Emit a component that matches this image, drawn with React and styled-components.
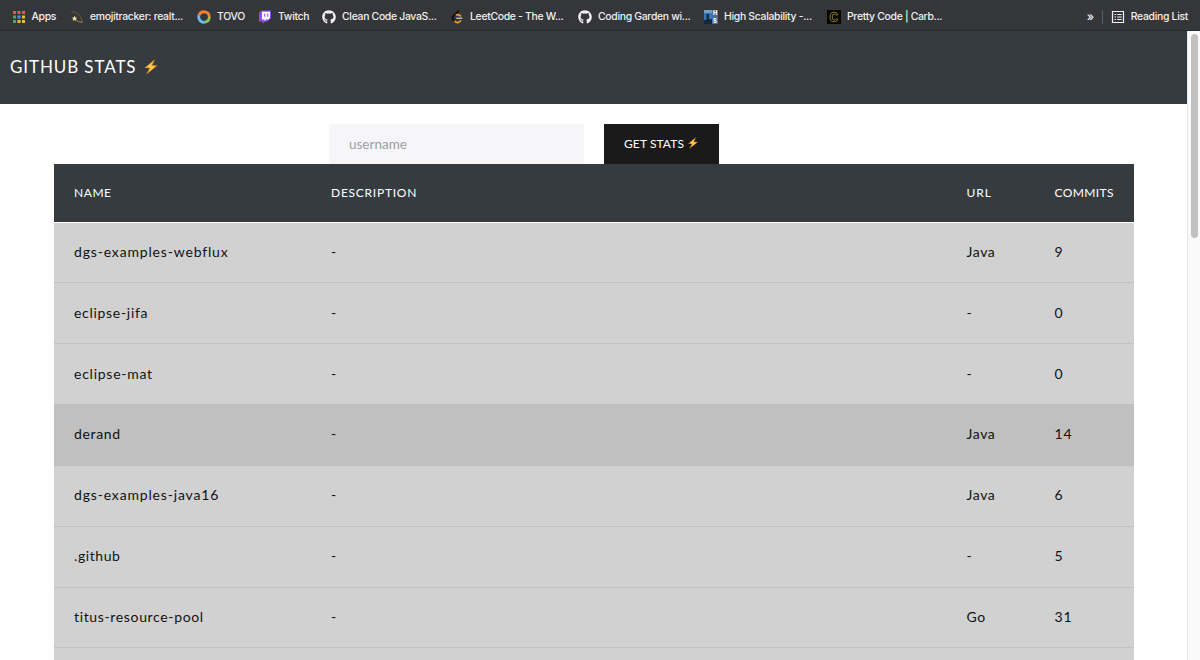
import React, { useState } from "react";
import { FaGithub } from "react-icons/fa";
import styled, { createGlobalStyle } from "styled-components";

const repos = [
  { name: "dgs-examples-webflux", language: "Java", commits: 9, spacing: 0.83 },
  { name: "eclipse-jifa", language: "-", commits: 0, spacing: 0.7 },
  { name: "eclipse-mat", language: "-", commits: 0, spacing: 0.75 },
  { name: "derand", language: "Java", commits: 14, active: true, spacing: 0.65 },
  { name: "dgs-examples-java16", language: "Java", commits: 6, spacing: 0.83 },
  { name: ".github", language: "-", commits: 5, spacing: 0.58 },
  { name: "titus-resource-pool", language: "Go", commits: 31, spacing: 0.65 },
];

const AppsIcon = () => (
  <svg viewBox="0 0 14 14">
    <path fill="#e8564a" d="M1 1h3v3H1zM5.5 1h3v3h-3zM10 1h3v3h-3z" />
    <path fill="#4fa565" d="M1 5.5h3v3H1zM1 10h3v3H1z" />
    <path fill="#4d8ef0" d="M5.5 5.5h3v3h-3z" />
    <path fill="#f3b83f" d="M10 5.5h3v3h-3zM5.5 10h3v3h-3zM10 10h3v3h-3z" />
  </svg>
);

const OrbitIcon = () => (
  <svg viewBox="0 0 14 14" fill="none" strokeLinecap="round">
    <path d="M1.8 1.8C7 1.800 11.800 6 12.200 12" stroke="#75683f" strokeWidth=".8" />
    <path d="M5.500 9.500C7.500 11.700 10 12.600 12.200 12" stroke="#a8924b" strokeWidth=".9" />
    <path
      d="M4.600 5.800l.8 1.700 1.900.3-1.400 1.300.3 1.900-1.600-.9-1.700.9.3-1.900-1.400-1.300 1.900-.3z"
      fill="#f5dd90"
    />
  </svg>
);

const TovoIcon = () => (
  <svg viewBox="0 0 14 14" fill="none" strokeWidth="2.800">
    <path d="M2 5.300A5.300 5.300 0 0 1 12.300 7" stroke="#f08236" />
    <path d="M2 5.300A5.300 5.300 0 0 0 8 12.200" stroke="#66bdf2" />
    <path d="M8 12.200A5.300 5.300 0 0 0 12.300 7" stroke="#8cc45c" />
  </svg>
);

const TwitchIcon = () => (
  <svg viewBox="0 0 14 14">
    <path fill="#8c4bf6" d="M3.300.6H13v7.600l-3.600 3.400H7l-2.400 2.100v-2.100H1V3z" />
    <path fill="#fff" d="M4 1.700h8v6L10.200 9.500H8.200L6.500 11V9.500H4z" />
    <path fill="#8c4bf6" d="M6.200 3.600h1.100v3.200H6.200zM9.200 3.600h1.100v3.200H9.200z" />
  </svg>
);

const LeetIcon = () => (
  <svg viewBox="0 0 14 14" fill="none" strokeWidth="1.700" strokeLinecap="round">
    <path d="M8.300 1L3 6.500Q1.900 7.800 3 9.200L5 11.400" stroke="#090909" />
    <path d="M6.300 4.900Q8.300 3.800 10.500 5.900M5 11.400Q7.500 14 10.500 11" stroke="#f5a02c" />
    <path d="M6.800 8.300h5" stroke="#b3b3b3" strokeWidth="1.400" />
  </svg>
);

const ScalabilityIcon = () => (
  <svg viewBox="0 0 14 14">
    <path fill="#3c74ad" d="M0 0h14v14H0z" />
    <path fill="#6f9fc8" d="M0 0h8v3H0z" />
    <path fill="#14283d" d="M0 10l8-1V14H0zM2.5 4h2.500v6H2.500z" />
    <text x="9" y="5.400" fill="#fff" fontSize="5.600" fontWeight="800">H</text>
    <text x="9" y="12.900" fill="#fff" fontSize="5.600" fontWeight="800">S</text>
  </svg>
);

const CarbonIcon = () => (
  <svg viewBox="0 0 14 14" fill="none">
    <path fill="#050505" d="M0 0h14v14H0z" />
    <path
      d="M10.800 4.900Q10.300 2.200 7 2.200 3 2.200 3 7t4 4.800q3.300 0 3.800-2.700H8.900Q8.500 10 7.200 10 5.200 10 5.200 7t2-3q1.300 0 1.700.9z"
      stroke="#a7942c"
      strokeWidth=".8"
    />
  </svg>
);

const ReadingIcon = () => (
  <svg viewBox="0 0 14 14" fill="none" stroke="#f1f1f1">
    <path d="M1.500 1.500h11v11h-11z" strokeWidth="1.200" />
    <path d="M3.500 4.500h1.500M3.500 7h1.500M3.500 9.500h1.500M6.200 4.500h4.500M6.200 7h4.500M6.200 9.500h4.500" />
  </svg>
);

const Bolt = ({ size }) => (
  <BoltSvg viewBox="0 0 16 16" $size={size}>
    <path fill="#f29a1f" d="M12 .3L1.500 9l5 .3-3.500 6.400L14.500 6.600 9.200 6.200z" />
    <path fill="#ffd35c" d="M10.600 2.200L3.900 8.100l4.300.4-2.800 4.700 6.800-5.700-4.500-.5z" />
  </BoltSvg>
);

const bookmarks = [
  { label: "Apps", icon: <AppsIcon />, width: 58.5 },
  { label: "emojitracker: realt...", icon: <OrbitIcon />, width: 127 },
  { label: "TOVO", icon: <TovoIcon />, width: 61 },
  { label: "Twitch", icon: <TwitchIcon />, width: 64 },
  { label: "Clean Code JavaS...", icon: <FaGithub />, width: 128 },
  { label: "LeetCode - The W...", icon: <LeetIcon />, width: 128 },
  { label: "Coding Garden wi...", icon: <FaGithub />, width: 126 },
  { label: "High Scalability -...", icon: <ScalabilityIcon />, width: 123 },
  { label: "Pretty Code | Carb...", icon: <CarbonIcon />, width: 120 },
];

function App() {
  const [username, setUsername] = useState("");

  return (
    <Window>
      <GlobalStyle />
      <BookmarkBar>
        {bookmarks.map(({ label, icon, width }) => (
          <Bookmark key={label} $width={width}>
            {icon}
            <span>{label}</span>
          </Bookmark>
        ))}
        <ReadingList>
          <More>»</More>
          <Divider />
          <ReadingIcon />
          <span>Reading List</span>
        </ReadingList>
      </BookmarkBar>
      <Body>
        <Page>
          <Header>
            <Title>GITHUB STATS</Title>
            <Bolt size={16} />
          </Header>
          <Form onSubmit={(e) => e.preventDefault()}>
            <Input
              type="text"
              placeholder="username"
              value={username}
              onChange={(e) => setUsername(e.target.value)}
            />
            <Button>
              GET STATS
              <Bolt size={12} />
            </Button>
          </Form>
          <Table>
            <HeadRow>
              <Cell $spacing={0.55}>NAME</Cell>
              <Cell $spacing={0.75}>DESCRIPTION</Cell>
              <Cell $spacing={0.9}>URL</Cell>
              <Cell $spacing={0.4}>COMMITS</Cell>
            </HeadRow>
            {repos.map((repo) => (
              <Row key={repo.name} $active={repo.active}>
                <Cell $spacing={repo.spacing}>{repo.name}</Cell>
                <Cell>-</Cell>
                <Cell $spacing={0.6}>{repo.language}</Cell>
                <Cell>{repo.commits}</Cell>
              </Row>
            ))}
            <Row />
          </Table>
        </Page>
        <Scrollbar>
          <Thumb />
        </Scrollbar>
      </Body>
    </Window>
  );
}

export default App;

const GlobalStyle = createGlobalStyle`
  * {
    box-sizing: border-box;
  }

  body {
    margin: 0;
    overflow: hidden;
    font-family: Lato, sans-serif;
  }
`;

const Window = styled.div`
  display: flex;
  flex-direction: column;
  width: 1200px;
  height: 660px;
  overflow: hidden;
  background: #fff;
`;

const BookmarkBar = styled.div`
  display: flex;
  align-items: center;
  flex: 0 0 31px;
  padding: 3px 12px 0 11.5px;
  background: #35363a;
  border-bottom: 1px solid #292b2d;
  color: #f1f1f1;
  font: 500 10.4px Inter, sans-serif;
  letter-spacing: -0.3px;
  white-space: nowrap;

  svg {
    flex: none;
    width: 14px;
    height: 14px;
    letter-spacing: 0;
  }
`;

const Bookmark = styled.div`
  display: flex;
  align-items: center;
  gap: 6px;
  flex: 0 0 ${(p) => p.$width}px;
`;

const ReadingList = styled.div`
  display: flex;
  align-items: center;
  margin-left: auto;

  svg {
    margin-right: 6px;
  }
`;

const More = styled.span`
  font-size: 12px;
`;

const Divider = styled.div`
  width: 1px;
  height: 14px;
  margin: 0 8px;
  background: #5b5c60;
`;

const Body = styled.div`
  display: flex;
  flex: 1;
  min-height: 0;
`;

const Page = styled.main`
  flex: 1;
  overflow: hidden;
`;

const Header = styled.header`
  display: flex;
  align-items: center;
  height: 73px;
  padding: 0 10px 2px;
  background: #363b3f;
  color: #fff;
`;

const Title = styled.h1`
  width: 133px;
  margin: 0;
  font-size: 17px;
  font-weight: 400;
  letter-spacing: 0.9px;
  white-space: nowrap;
`;

const BoltSvg = styled.svg`
  width: ${(p) => p.$size}px;
  height: ${(p) => p.$size}px;
`;

const Form = styled.form`
  display: flex;
  gap: 20px;
  padding: 20px 0 0 329px;
`;

const Input = styled.input`
  width: 255px;
  height: 40px;
  padding: 0 20px;
  border: 0;
  outline: 0;
  background: #f6f6f8;
  font: 13.5px Lato, sans-serif;

  &::placeholder {
    color: #9a9fa3;
  }
`;

const Button = styled.button`
  display: flex;
  align-items: center;
  justify-content: space-between;
  width: 115px;
  height: 40px;
  padding: 0 20px 2px;
  border: 0;
  background: #1a1a1a;
  color: #fff;
  font: 12px Lato, sans-serif;
  letter-spacing: 0.1px;
  white-space: nowrap;
`;

const Table = styled.div`
  width: 1080px;
  margin-left: 54px;
`;

const HeadRow = styled.div`
  display: grid;
  grid-template-columns: 257px 635.5px 88px 60px;
  align-items: center;
  height: 57.5px;
  margin-bottom: 1px;
  padding-left: 20px;
  background: #363b3f;
  color: #fff;
  font-size: 12px;
`;

const Row = styled.div`
  display: grid;
  grid-template-columns: 257px 635.5px 88px 60px;
  align-items: center;
  height: 60.85px;
  padding: 0 0 2px 20px;
  background: ${(p) => (p.$active ? "#c0c0c0" : "#d1d1d1")};
  border-bottom: 1px solid ${(p) => (p.$active ? "#c0c0c0" : "#c1c1c1")};
  color: #111;
  font-size: 14px;
`;

const Cell = styled.span`
  letter-spacing: ${(p) => p.$spacing ?? 1}px;
`;

const Scrollbar = styled.div`
  width: 13px;
  padding: 3px 2px 0 3px;
  background: #fafafa;
  border-left: 1px solid #e8e8e8;
`;

const Thumb = styled.div`
  width: 7px;
  height: 204px;
  border-radius: 4px;
  background: #c1c1c1;
`;
